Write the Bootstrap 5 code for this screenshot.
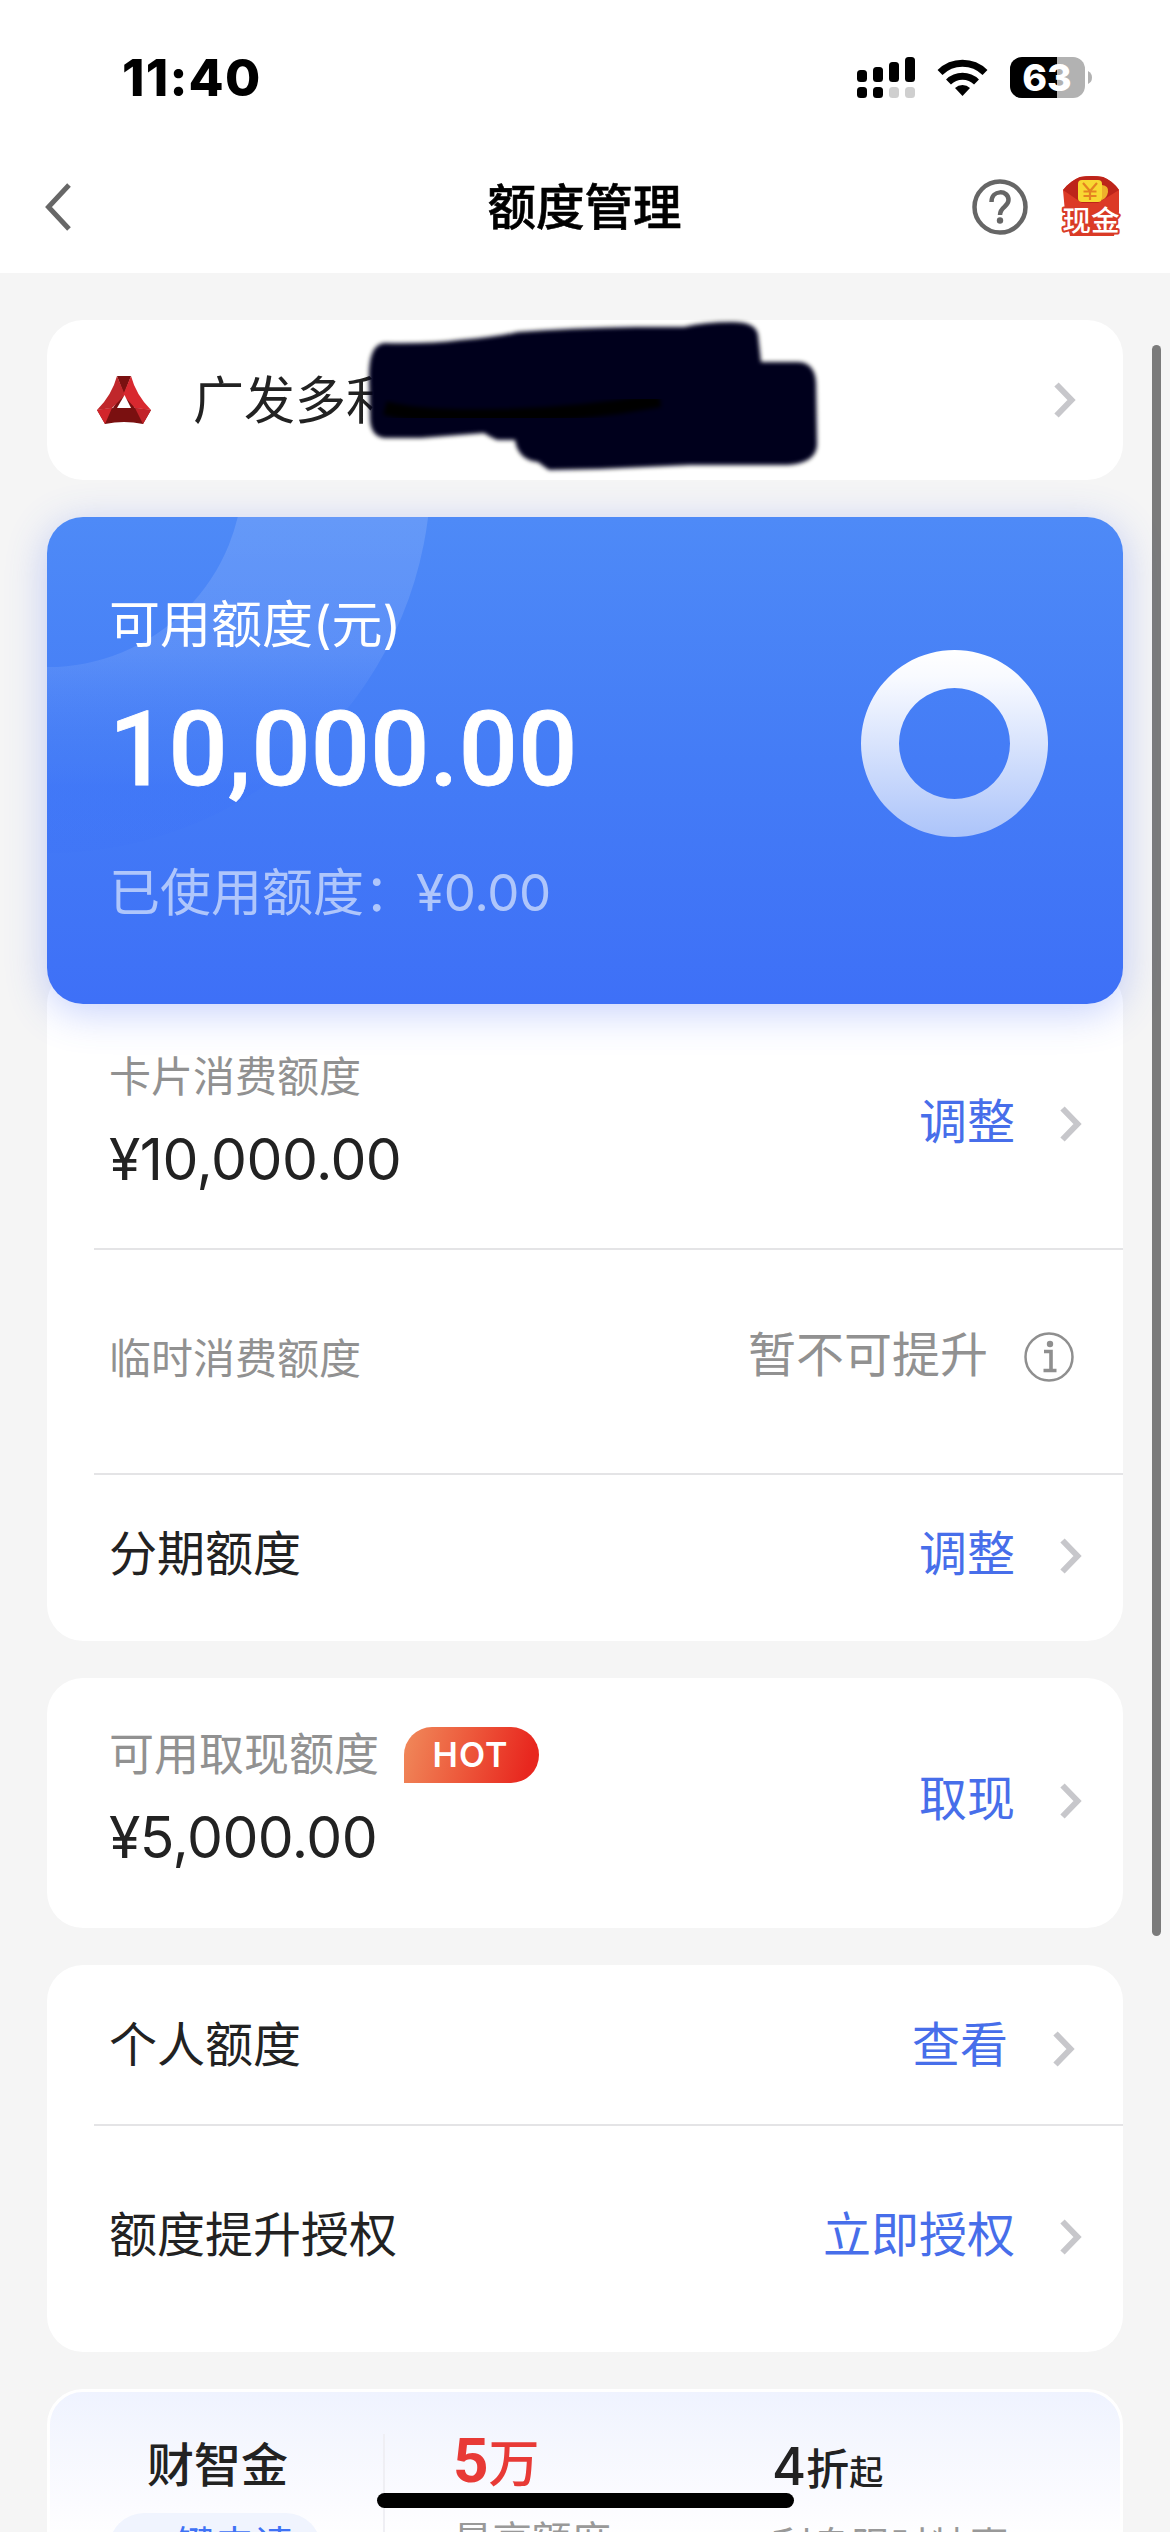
<!DOCTYPE html>
<html lang="zh-CN">
<head>
<meta charset="utf-8">
<meta name="viewport" content="width=device-width, initial-scale=1">
<title>额度管理</title>
<link href="https://cdn.jsdelivr.net/npm/bootstrap@5.3.0/dist/css/bootstrap.min.css" rel="stylesheet">
<style>
:root{--ink:#222;--mute:#919191;--link:#476eea}
html,body{height:2532px;overflow:hidden}
body{font-family:Inter,"Noto Sans CJK SC",sans-serif;background:#f5f5f5;color:var(--ink);line-height:1.3;position:relative}
svg{display:block;flex:none}
.top-area{height:273px}
.status{height:155px;padding:0 78px 0 122px}
.clock{font-size:51px;font-weight:800;letter-spacing:1.2px;line-height:60px}
.titlebar{height:104px;padding:0 44px 0 44px}
.titlebar h1{font-size:48.500px;font-weight:500;color:#000;line-height:60px;margin:1px 1px 0 0;-webkit-text-stroke:.6px #000}
.page{padding:47px 47px 0;gap:37px}
.panel{background:#fff;border-radius:36px}
.account{height:160px;padding:0 47px 0 50px;font-size:51px}
.acct-name{margin-left:42px;padding-top:2px}
.scribble{left:360px;top:314px}
.hero{height:487px;border-radius:36px;background:linear-gradient(#4e8af7 0%,#447cf6 50%,#3e70f7 100%);color:#fff;padding:74px 75px 0 62px;box-shadow:0 8px 40px rgba(62,100,245,.3);z-index:1}
.hero-deco{left:0;top:0;border-radius:36px}
.hero-label{font-size:51px;line-height:68px}
.hero-sum{font-family:Roboto,"Liberation Sans",sans-serif;font-weight:500;font-size:104px;line-height:120px;margin-top:31px;letter-spacing:.3px;-webkit-text-stroke:.8px #fff}
.hero-used{font-size:51px;line-height:68px;margin-top:49px;color:#afc6fb}
.hero-used span{letter-spacing:-.4px;margin-left:1px}
.ring{margin-top:59px}
.limits{margin-top:-36px;padding-top:36px}
.line-row{padding-left:62px}
.line-row + .line-row::before{content:"";position:absolute;left:47px;right:0;top:0;height:2px;background:#e4e4e6}
.cap42{font-size:42px;line-height:56px;color:var(--mute)}
.cap45{font-size:45px;line-height:60px;color:var(--mute)}
.amount{font-size:57px;line-height:70px;letter-spacing:-.5px}
.f48{font-size:48px;line-height:64px}
.act{color:var(--link);gap:45px;padding-right:41px}
.act svg{margin-top:4px}
.hot{width:135px;height:56px;border-radius:28px 28px 28px 0;background:linear-gradient(105deg,#f08a5b 0%,#ed5a3c 45%,#e8271f 90%);color:#fff;font-size:34px;font-weight:600;letter-spacing:1px;margin-left:25px;padding-right:2px}
.promo{height:240px;border:3px solid #fff;background:linear-gradient(#eff3ff 0,#f5f7fe 50px,#fbfbff 110px,#fff 150px)}
.promo-name{width:335px;padding-left:97px;border-right:2px solid #efeff4;margin-top:42px}
.promo-name strong{font-size:47px;font-weight:500;line-height:62px;display:block}
.pill{width:212px;height:70px;margin-left:-38px;margin-top:17px;border-radius:35px;background:#f0f4fe;color:#3f72f5;font-size:39px;line-height:64px}
.promo-col{padding-left:68px;width:319px;white-space:nowrap}
.promo-col .fig{height:62px;margin-top:44px;line-height:62px}
.promo-col .fig-red{margin-top:38px;margin-bottom:6px;color:#e83a36}
.promo-sub{font-size:39.500px;line-height:56px;color:#999;margin-top:21px}
.scroller{left:1152px;top:345px;width:9px;height:1591px;border-radius:5px;background:#7b7b7b}
.homebar{left:377px;top:2493px;width:417px;height:15px;border-radius:8px;background:#000}
</style>
</head>
<body>
<svg width="0" height="0" class="position-absolute">
  <symbol id="chev" viewBox="0 0 22 36"><path d="M2.500 2.500 L17.500 18 L2.500 33.500" fill="none" stroke="#c7c7cb" stroke-width="6"/></symbol>
</svg>

<header class="top-area bg-white">
  <div class="status d-flex align-items-center justify-content-between">
    <span class="clock text-black">11:40</span>
    <svg width="236" height="42" viewBox="0 0 236 42">
      <g fill="#000">
        <rect x="1" y="13" width="10" height="12" rx="3.500"/><rect x="17" y="10" width="10" height="15" rx="3.500"/>
        <rect x="33" y="5" width="10" height="20" rx="3.500"/><rect x="49" y="0" width="10" height="25" rx="3.500"/>
        <rect x="1" y="30" width="10" height="11" rx="3.500"/><rect x="17" y="30" width="10" height="11" rx="3.500"/>
      </g>
      <g fill="#cfcfcf"><rect x="33" y="30" width="10" height="11" rx="3.500"/><rect x="49" y="30" width="10" height="11" rx="3.500"/></g>
      <g fill="none" stroke="#000" stroke-width="7">
        <path d="M84 15.500 A32 32 0 0 1 129 15.500"/><path d="M92.500 25 A20 20 0 0 1 120.500 25"/>
      </g>
      <path d="M99 31 A11 11 0 0 1 114 31 L106.500 39 Z" fill="#000"/>
      <clipPath id="bat"><rect x="154" y="0" width="75" height="41" rx="12"/></clipPath>
      <g clip-path="url(#bat)"><rect x="154" width="75" height="41" fill="#b2b2b2"/><rect x="154" width="47" height="41" fill="#000"/></g>
      <path d="M232 14 Q236 16 236 20.500 Q236 25 232 27 Z" fill="#b2b2b2"/>
      <text x="191" y="34" text-anchor="middle" font-family="Inter" font-weight="800" font-size="37.500" fill="#fff">63</text>
    </svg>
  </div>
  <div class="titlebar d-flex align-items-center">
    <div class="col"><svg width="28" height="48" viewBox="0 0 28 48"><path d="M25 2 L4.500 24 L25 46" fill="none" stroke="#676767" stroke-width="5"/></svg></div>
    <h1>额度管理</h1>
    <div class="col d-flex justify-content-end align-items-center gap-4">
      <svg width="56" height="56" viewBox="0 0 56 56" class="me-1"><circle cx="28" cy="28" r="25.500" fill="none" stroke="#666" stroke-width="4.500"/><path d="M19.500 23 C19.500 10.500 36.500 10.500 36.500 21 C36.500 28 28 27.500 28 36" fill="none" stroke="#666" stroke-width="4.500"/><circle cx="28" cy="41.500" r="3.200" fill="#666"/></svg>
      <svg width="70" height="62" viewBox="-6 0 70 62">
        <path d="M1 14 Q8 5 18 1 Q30 -1 41 1 Q51 5 57 14 V36 L52 60 H8 L3 36Z" fill="#dc3a26"/>
        <path d="M1 14 Q8 5 18 1 Q30 -1 41 1 Q51 5 57 14 L36 27 H20Z" fill="#bd241a"/>
        <path d="M40 9 Q47 10 46 16 Q45 22 40 24Z" fill="#eeb02b"/>
        <rect x="16" y="4" width="24" height="22" rx="4" fill="#f8d832"/>
        <path d="M21 7 L28 15 L35 7 M28 15 V24 M21.500 15.500 H34.500 M21.500 20 H34.500" fill="none" stroke="#e58321" stroke-width="2.200"/>
        <text x="29" y="55" text-anchor="middle" font-family="Noto Sans CJK SC" font-weight="500" font-size="28.500" fill="#fff" stroke="#d93b27" stroke-width="4" stroke-linejoin="round" paint-order="stroke">现金</text>
      </svg>
    </div>
  </div>
</header>

<main class="page d-flex flex-column">
  <section class="panel account d-flex align-items-center">
    <svg width="54" height="50" viewBox="0 0 54 50">
      <path d="M20 1 H34 L28 17 L38 33 L54 35 L46 49 Q27 45 8 49 L0 35 L16 33 L26 17Z" fill="#7a1010"/>
      <path d="M20 1 L28 20 L15 33 L0 35 Q15 20 20 1Z" fill="#c0272b"/>
      <path d="M34 1 Q39 20 54 35 L38 33 L26 20Z" fill="#d8282f"/>
      <path d="M0 35 L15 33 L8 49Z" fill="#d2252b"/><path d="M54 35 L38 33 L46 49Z" fill="#c22329"/>
      <path d="M27.500 20 L34 33 H20Z" fill="#fff"/>
    </svg>
    <span class="flex-grow-1 text-nowrap acct-name">广发多利</span>
    <svg width="22" height="36"><use href="#chev"/></svg>
  </section>

  <div>
    <section class="hero position-relative d-flex justify-content-between">
      <svg class="hero-deco position-absolute" width="1076" height="487">
        <defs><linearGradient id="fade" gradientUnits="userSpaceOnUse" x1="0" y1="0" x2="0" y2="336"><stop offset="0" stop-color="#fff" stop-opacity=".13"/><stop offset=".4" stop-color="#fff" stop-opacity=".1"/><stop offset=".7" stop-color="#5f8cff" stop-opacity=".04"/><stop offset=".8" stop-color="#2f62ff" stop-opacity=".1"/><stop offset="1" stop-color="#2f62ff" stop-opacity=".05"/></linearGradient></defs>
        <path fill-rule="evenodd" fill="url(#fade)" d="M1 336 A383 383 0 0 0 384 -47 H196 A195 195 0 0 1 0 150 V336Z"/>
      </svg>
      <div class="position-relative">
        <div class="hero-label">可用额度(元)</div>
        <div class="hero-sum">10,000.00</div>
        <div class="hero-used">已使用额度：<span>¥0.00</span></div>
      </div>
      <svg class="ring" width="187" height="187" viewBox="0 0 187 187">
        <defs><linearGradient id="rg" x1="0" y1="0" x2="0" y2="1"><stop offset="0" stop-color="#fff"/><stop offset=".15" stop-color="#f8faff"/><stop offset="1" stop-color="#acc4fa"/></linearGradient></defs>
        <path fill-rule="evenodd" fill="url(#rg)" d="M93.500 0a93.500 93.500 0 1 0 .01 0ZM93.500 38a55.500 55.500 0 1 1-.01 0Z"/>
      </svg>
    </section>

    <section class="panel limits">
      <div class="line-row position-relative d-flex justify-content-between" style="height:244px">
        <div style="padding-top:45px"><div class="cap42">卡片消费额度</div><div class="amount" style="margin-top:20px">¥10,000.00</div></div>
        <div class="act f48 d-flex align-items-center pb-2">调整<svg width="22" height="36"><use href="#chev"/></svg></div>
      </div>
      <div class="line-row position-relative d-flex justify-content-between align-items-center" style="height:225px">
        <div class="cap42 pb-1">临时消费额度</div>
        <div class="f48 d-flex align-items-center pb-2" style="color:var(--mute);gap:35px;padding-right:48px"><span style="padding-bottom:3px">暂不可提升</span>
          <svg width="52" height="52" viewBox="0 0 52 52"><circle cx="26" cy="26" r="23.500" fill="none" stroke="#8f8f8f" stroke-width="2.500"/><circle cx="27" cy="13" r="3.200" fill="#8f8f8f"/><path d="M21 20.500 H28 V39 M20.500 39.500 H33.500" fill="none" stroke="#8f8f8f" stroke-width="3.600"/></svg>
        </div>
      </div>
      <div class="line-row position-relative d-flex justify-content-between align-items-center" style="height:168px;padding-bottom:7px">
        <div class="f48">分期额度</div>
        <div class="act f48 d-flex align-items-center">调整<svg width="22" height="36"><use href="#chev"/></svg></div>
      </div>
    </section>
  </div>

  <section class="panel line-row d-flex justify-content-between" style="height:250px">
    <div style="padding-top:47px"><div class="cap45 d-flex align-items-center">可用取现额度<span class="hot d-flex align-items-center justify-content-center">HOT</span></div><div class="amount" style="margin-top:18px">¥5,000.00</div></div>
    <div class="act f48 d-flex align-items-center pb-2">取现<svg width="22" height="36"><use href="#chev"/></svg></div>
  </section>

  <section class="panel" style="height:387px">
    <div class="line-row position-relative d-flex justify-content-between align-items-center" style="height:159px">
      <div class="f48">个人额度</div>
      <div class="act f48 d-flex align-items-center pe-5">查看<svg width="22" height="36" class="mt-2"><use href="#chev"/></svg></div>
    </div>
    <div class="line-row position-relative d-flex justify-content-between align-items-center" style="height:222px">
      <div class="f48">额度提升授权</div>
      <div class="act f48 d-flex align-items-center">立即授权<svg width="22" height="36"><use href="#chev"/></svg></div>
    </div>
  </section>

  <section class="panel promo d-flex">
    <div class="promo-name"><strong>财智金</strong><div class="pill text-center">一键申请</div></div>
    <div class="promo-col"><div class="fig fig-red"><span style="font:700 62px/62px Roboto">5</span><span style="font-size:51px;font-weight:500">万</span></div><div class="promo-sub">最高额度</div></div>
    <div class="promo-col"><div class="fig" style="font-weight:500"><span style="font-size:52px">4</span><span style="font-size:43px">折</span><span style="font-size:34px">起</span></div><div class="promo-sub">利息限时特惠</div></div>
  </section>
</main>

<svg class="scribble position-absolute" width="470" height="166" viewBox="360 314 470 166">
  <filter id="soft" x="-5%" y="-5%" width="110%" height="110%"><feGaussianBlur stdDeviation="2.200"/></filter>
  <path filter="url(#soft)" fill="#04001c" d="M369 380 Q368 345 384 343 Q430 344 460 340 Q495 337 518 332 Q570 328 636 327 L684 327 Q705 322 732 322 Q756 322 758 335 L761 362 L797 362 Q815 362 816 383 L817 445 Q816 463 788 465 L690 465 L600 469 L549 470 Q543 466 538 462 Q518 460 515 440 L497 440 Q490 437 484 433 L421 438 L384 438 Q371 436 370 420Z"/>
  <path filter="url(#soft)" fill="none" stroke="#010006" stroke-width="14" d="M385 408 Q420 418 500 416 Q580 415 660 400"/>
</svg>
<div class="scroller position-absolute"></div>
<div class="homebar position-absolute"></div>
<script src="https://cdn.jsdelivr.net/npm/bootstrap@5.3.0/dist/js/bootstrap.bundle.min.js"></script>
</body>
</html>
